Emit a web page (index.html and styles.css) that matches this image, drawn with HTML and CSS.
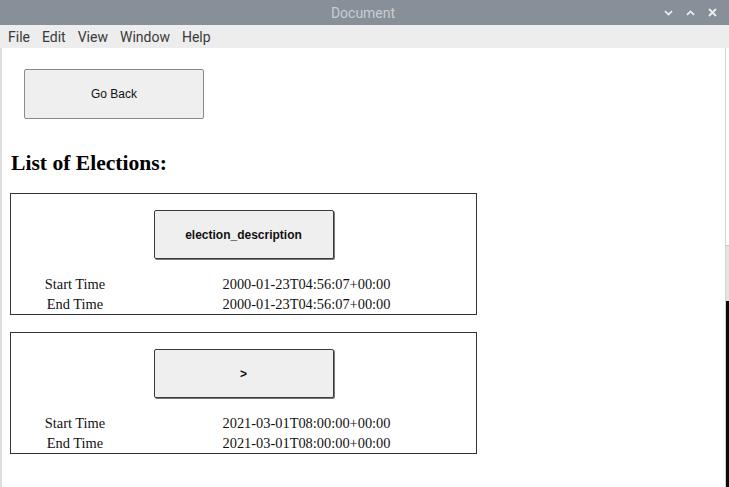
FILE: index.html
```html
<!DOCTYPE html>
<html>
<head>
<meta charset="utf-8">
<title>Document</title>
<link rel="stylesheet" href="styles.css">
</head>
<body>
<div class="titlebar">
  <span class="title">Document</span>
  <div class="controls">
    <svg class="ctl" width="9" height="6" viewBox="0 0 9 6"><path d="M1 1.2 L4.5 4.6 L8 1.2" fill="none" stroke="#eceef0" stroke-width="1.8"/></svg>
    <svg class="ctl" width="9" height="6" viewBox="0 0 9 6"><path d="M1 4.8 L4.5 1.4 L8 4.8" fill="none" stroke="#eceef0" stroke-width="1.8"/></svg>
    <svg class="ctl" width="9" height="9" viewBox="0 0 9 9"><path d="M1 1 L8 8 M8 1 L1 8" fill="none" stroke="#eceef0" stroke-width="1.8"/></svg>
  </div>
</div>
<div class="menubar">
  <span>File</span><span>Edit</span><span>View</span><span>Window</span><span>Help</span>
</div>
<div class="area">
  <div class="main">
    <button class="back">Go Back</button>
    <h2 class="heading">List of Elections:</h2>
    <div class="card">
      <button class="elect">election_description</button>
      <div class="rows">
        <span>Start Time</span><span>2000-01-23T04:56:07+00:00</span>
        <span>End Time</span><span>2000-01-23T04:56:07+00:00</span>
      </div>
    </div>
    <div class="card">
      <button class="elect">&gt;</button>
      <div class="rows">
        <span>Start Time</span><span>2021-03-01T08:00:00+00:00</span>
        <span>End Time</span><span>2021-03-01T08:00:00+00:00</span>
      </div>
    </div>
  </div>
  <div class="desk">
    <div class="desk-a"></div>
    <div class="desk-b"></div>
    <div class="desk-c"></div>
  </div>
</div>
</body>
</html>
```
FILE: styles.css
```css
html, body {
  margin: 0;
  padding: 0;
  width: 729px;
  height: 487px;
  overflow: hidden;
  background: #ffffff;
}
body {
  display: flex;
  flex-direction: column;
  font-family: "Liberation Serif", "Times New Roman", serif;
}
.titlebar {
  height: 25px;
  flex: none;
  background: #878f98;
  display: flex;
  align-items: center;
  justify-content: center;
  position: relative;
}
.title {
  font-family: Roboto, "Liberation Sans", sans-serif;
  font-size: 14px;
  color: #c9cdd2;
  margin-left: -3px;
}
.controls {
  position: absolute;
  right: 12px;
  top: 0;
  height: 25px;
  display: flex;
  align-items: center;
  gap: 13px;
}
.ctl { display: block; }
.menubar {
  height: 23px;
  flex: none;
  background: #ededed;
  display: flex;
  align-items: center;
  padding-left: 8px;
  gap: 12px;
  font-family: Roboto, "Liberation Sans", sans-serif;
  font-size: 14px;
  color: #3a3a3a;
}
.area {
  flex: 1;
  display: flex;
}
.main {
  flex: 1;
  border-left: 2px solid #dedede;
  border-right: 1px solid #d4d4d4;
  padding: 21px 8px 0 8px;
  display: flex;
  flex-direction: column;
  align-items: flex-start;
}
.desk {
  width: 3px;
  display: flex;
  flex-direction: column;
}
.desk-a { height: 197px; background: #ffffff; }
.desk-b { height: 55px; background: #e4e4e4; border-top: 1px solid #c8c8c8; }
.desk-c { flex: 1; background: #0a0a0a; }
.back {
  margin: 0 0 0 14px;
  width: 180px;
  height: 50px;
  background: #efefef;
  border: 1px solid #8a8a8a;
  border-radius: 2px;
  font-family: "Liberation Sans", Arial, sans-serif;
  font-size: 12px;
  color: #111;
  padding: 0;
}
.heading {
  margin: 32px 0 18px 1px;
  font-size: 21.6px;
  line-height: 24px;
  font-weight: bold;
  color: #000;
}
.card {
  width: 465px;
  border: 1px solid #333;
  padding-top: 16px;
  margin-bottom: 17px;
  display: flex;
  flex-direction: column;
  align-items: center;
}
.elect {
  width: 180px;
  height: 49px;
  background: #efefef;
  border: 1px solid #3a3a3a;
  border-radius: 2px;
  box-shadow: 1px 1px 0 #777;
  font-family: "Liberation Sans", Arial, sans-serif;
  font-size: 12px;
  font-weight: bold;
  color: #111;
  padding: 0;
  margin: 0;
}
.rows {
  align-self: stretch;
  margin-top: 16px;
  display: grid;
  grid-template-columns: 128px 335px;
  font-size: 14.4px;
  line-height: 19.5px;
  color: #111;
  text-align: center;
}
```
